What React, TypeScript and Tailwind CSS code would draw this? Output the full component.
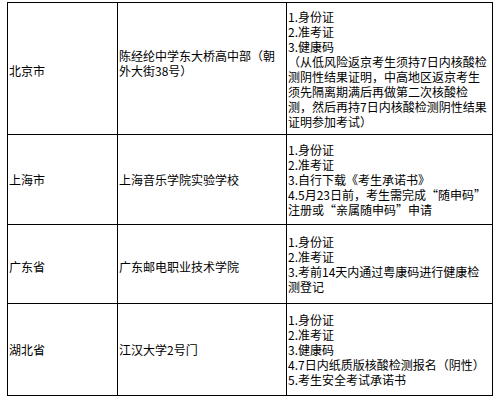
import React from "react";

const rows: { a: string; b: string[]; c: string[]; bClass?: string; aClass?: string }[] = [
  {
    a: "北京市",
    b: ["陈经纶中学东大桥高中部（朝", "外大街38号）"],
    c: [
      "1.身份证",
      "2.准考证",
      "3.健康码",
      "（从低风险返京考生须持7日内核酸检",
      "测阴性结果证明，中高地区返京考生",
      "须先隔离期满后再做第二次核酸检",
      "测，然后再持7日内核酸检测阴性结果",
      "证明参加考试）",
    ],
    bClass: "pb-[12px]",
    aClass: "pt-[3px]",
  },
  {
    a: "上海市",
    b: ["上海音乐学院实验学校"],
    c: [
      "1.身份证",
      "2.准考证",
      "3.自行下载《考生承诺书》",
      "4.5月23日前，考生需完成“随申码”",
      "注册或“亲属随申码”申请",
    ],
  },
  {
    a: "广东省",
    b: ["广东邮电职业技术学院"],
    c: ["1.身份证", "2.准考证", "3.考前14天内通过粤康码进行健康检", "测登记"],
    aClass: "pt-[4px]",
    bClass: "pt-[4px]",
  },
  {
    a: "湖北省",
    b: ["江汉大学2号门"],
    c: ["1.身份证", "2.准考证", "3.健康码", "4.7日内纸质版核酸检测报名（阴性）", "5.考生安全考试承诺书"],
  },
];

export default function App() {
  return (
    <div
      className="w-[500px] h-[406px] bg-white overflow-hidden pt-[2px] pl-[7px] text-black text-[12px] leading-[15px]"
      style={{ fontFamily: '"Noto Sans CJK SC", "Noto Sans", sans-serif' }}
    >
      <div className="grid grid-cols-[110px_169px_206px] grid-rows-[132px_90px_79px_92px] w-[486px] border-l border-t border-black">
        {rows.map((r, i) => (
          <React.Fragment key={i}>
            <div className={`flex items-center border-r border-b border-black pl-[1px] whitespace-nowrap ${r.aClass ?? ""}`}>
              {r.a}
            </div>
            <div className={`flex items-center border-r border-b border-black pl-[1px] whitespace-nowrap ${r.bClass ?? ""}`}>
              <div>
                {r.b.map((l, j) => (
                  <div key={j}>{l}</div>
                ))}
              </div>
            </div>
            <div className="flex items-center border-r border-b border-black pl-[1px] whitespace-nowrap">
              <div>
                {r.c.map((l, j) => (
                  <div key={j}>{l}</div>
                ))}
              </div>
            </div>
          </React.Fragment>
        ))}
      </div>
    </div>
  );
}
